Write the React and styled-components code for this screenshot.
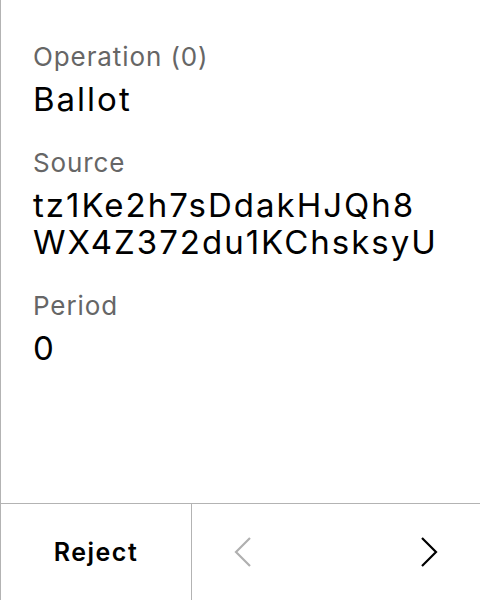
import React from "react";
import styled, { createGlobalStyle } from "styled-components";

const GlobalStyle = createGlobalStyle`
  html, body {
    margin: 0;
    padding: 0;
    background: #fff;
  }
  body {
    font-family: Inter, "Noto Sans", sans-serif;
  }
`;

const Screen = styled.div`
  width: 480px;
  height: 600px;
  box-sizing: border-box;
  border-left: 1px solid #b3b3b3;
  display: flex;
  flex-direction: column;
`;

const Details = styled.div`
  flex: 1;
  padding: 42px 36px 0 32px;
  display: flex;
  flex-direction: column;
  gap: 30px;
`;

const Field = styled.div`
  display: flex;
  flex-direction: column;
  gap: 9px;
`;

const Label = styled.div`
  font-size: 26px;
  line-height: 30px;
  letter-spacing: 0.9px;
  color: #666;
`;

const Value = styled.div`
  font-size: 33px;
  line-height: 37px;
  letter-spacing: 2px;
  color: #000;
  word-break: break-all;
`;

const Footer = styled.div`
  height: 96px;
  border-top: 1px solid #b3b3b3;
  display: flex;
`;

const RejectButton = styled.button`
  width: 191px;
  border: none;
  border-right: 1px solid #b3b3b3;
  background: none;
  font-family: inherit;
  font-size: 25px;
  font-weight: 600;
  letter-spacing: 1.5px;
  color: #000;
  padding: 0;
`;

const Pager = styled.div`
  flex: 1;
  display: flex;
  align-items: center;
  justify-content: space-between;
  padding: 0 40px;
`;

const NavButton = styled.button`
  border: none;
  background: none;
  padding: 0;
  display: flex;
  color: ${(p) => (p.disabled ? "#b0b0b0" : "#000")};
`;

const Chevron = ({ dir }) => (
  <svg width="22" height="32" viewBox="0 0 22 32" fill="none">
    <path
      d={dir === "left" ? "M18 2 L4 16 L18 30" : "M4 2 L18 16 L4 30"}
      stroke="currentColor"
      strokeWidth="2.2"
    />
  </svg>
);

const fields = [
  { label: "Operation (0)", value: "Ballot" },
  { label: "Source", value: "tz1Ke2h7sDdakHJQh8WX4Z372du1KChsksyU" },
  { label: "Period", value: "0" },
];

export default function App() {
  return (
    <>
      <GlobalStyle />
      <Screen>
        <Details>
          {fields.map((f) => (
            <Field key={f.label}>
              <Label>{f.label}</Label>
              <Value>{f.value}</Value>
            </Field>
          ))}
        </Details>
        <Footer>
          <RejectButton>Reject</RejectButton>
          <Pager>
            <NavButton disabled>
              <Chevron dir="left" />
            </NavButton>
            <NavButton>
              <Chevron dir="right" />
            </NavButton>
          </Pager>
        </Footer>
      </Screen>
    </>
  );
}
